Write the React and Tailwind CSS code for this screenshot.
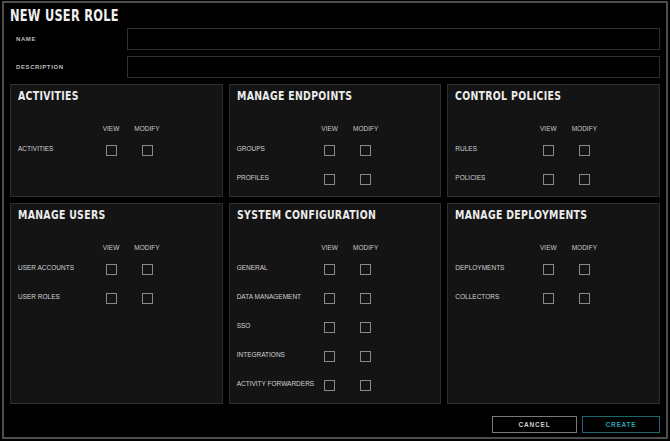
import React from "react";

const sections = [
  { title: "ACTIVITIES", rows: ["ACTIVITIES"] },
  { title: "MANAGE ENDPOINTS", rows: ["GROUPS", "PROFILES"] },
  { title: "CONTROL POLICIES", rows: ["RULES", "POLICIES"] },
  { title: "MANAGE USERS", rows: ["USER ACCOUNTS", "USER ROLES"] },
  {
    title: "SYSTEM CONFIGURATION",
    rows: ["GENERAL", "DATA MANAGEMENT", "SSO", "INTEGRATIONS", "ACTIVITY FORWARDERS"],
  },
  { title: "MANAGE DEPLOYMENTS", rows: ["DEPLOYMENTS", "COLLECTORS"] },
];

// condensed heading face, squeezed a bit more to match the reference
const narrow = "font-['DejaVu_Sans_Condensed',sans-serif] origin-left whitespace-nowrap";

function Box() {
  return <span className="block h-[11px] w-[11px] border-[1.5px] border-[#8a8a8a]" />;
}

function Section({ title, rows }) {
  return (
    <div className="border border-[#2e2e2e] bg-[#141414]">
      <div className="h-[24px] pl-[7px]">
        <h2 className={`${narrow} scale-x-[0.8] text-[13px] font-bold leading-[21px] tracking-[0.4px] text-[#ececec]`}>
          {title}
        </h2>
      </div>
      <div className="ml-[7px] mt-[14px] grid grid-cols-[75px_36px_36px] font-['Liberation_Sans',sans-serif] text-[6.5px] leading-[12px] text-[#c8c8c8]">
        <span />
        <span className="text-center">VIEW</span>
        <span className="text-center">MODIFY</span>
      </div>
      <div className="ml-[7px] mt-[1px]">
        {rows.map((row) => (
          <div key={row} className="grid h-[29px] grid-cols-[75px_36px_36px] items-center">
            <span className="-mt-[4px] whitespace-nowrap font-['Liberation_Sans',sans-serif] text-[6.5px] text-[#d2d2d2]">
              {row}
            </span>
            <span className="flex justify-center">
              <Box />
            </span>
            <span className="flex justify-center">
              <Box />
            </span>
          </div>
        ))}
      </div>
    </div>
  );
}

export default function App() {
  return (
    <div className="h-[441px] w-[670px] bg-black p-[1px] pl-[2px]">
      <div className="flex h-[438px] w-[666px] flex-col border-2 border-[#4d4d4d] px-[6px]">
        <div className="mt-[3px] h-[20px]">
          <h1 className={`${narrow} scale-x-[0.77] text-[16.5px] font-bold leading-[20px] tracking-[0.3px] text-[#f0f0f0]`}>
            NEW USER ROLE
          </h1>
        </div>
        <div className="mt-[2px] flex flex-col gap-[6px]">
          {["NAME", "DESCRIPTION"].map((label) => (
            <div key={label} className="flex items-center">
              <span className="w-[117px] pl-[6px] font-['Liberation_Sans',sans-serif] text-[6px] font-bold tracking-[0.6px] text-[#bdbdbd]">
                {label}
              </span>
              <div className="h-[22px] flex-1 border border-[#2f2f2f] bg-black" />
            </div>
          ))}
        </div>
        <div className="mt-[6px] grid grid-cols-3 grid-rows-[113px_201px] gap-[6px]">
          {sections.map((s) => (
            <Section key={s.title} {...s} />
          ))}
        </div>
        <div className="mt-[12px] flex justify-end gap-[5px]">
          <button className="h-[17px] w-[85px] border-[1.5px] border-[#7a7a7a] font-['Liberation_Sans',sans-serif] text-[6.5px] font-bold tracking-[0.8px] text-[#d0d0d0]">
            CANCEL
          </button>
          <button className="h-[17px] w-[78px] border-[1.5px] border-[#1d6870] font-['Liberation_Sans',sans-serif] text-[6.5px] font-bold tracking-[0.8px] text-[#2fa3b3]">
            CREATE
          </button>
        </div>
      </div>
    </div>
  );
}
